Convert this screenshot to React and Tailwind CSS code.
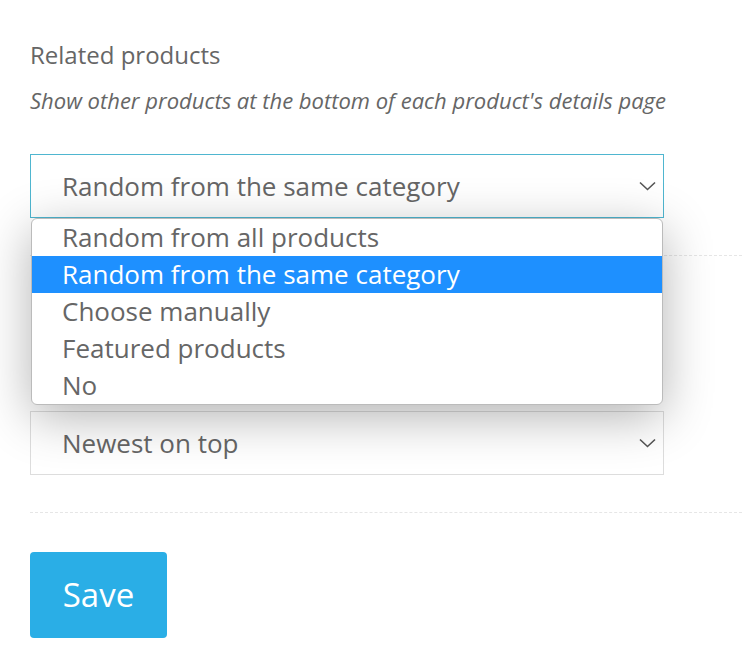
import { useState } from 'react'

const options = [
  'Random from all products',
  'Random from the same category',
  'Choose manually',
  'Featured products',
  'No',
]

const Chevron = () => (
  <svg width="17" height="10" viewBox="0 0 17 10" fill="none" className="shrink-0">
    <path d="M1 1.5l7.5 7 7.5-7" stroke="#555" strokeWidth="1.6" />
  </svg>
)

const App = () => {
  const [selected, setSelected] = useState(1)

  return (
    <div
      className="min-h-screen bg-white pl-[30px] pt-[39px] text-[#666]"
      style={{ fontFamily: '"Open Sans", "Noto Sans", sans-serif' }}
    >
      <div className="text-[24px] leading-[32px]">Related products</div>
      <div className="mt-[14px] text-[22px] leading-[30px] italic">
        Show other products at the bottom of each product's details page
      </div>

      <div className="relative mt-[39px] w-[634px]">
        <div className="flex h-[64px] items-center justify-between border border-[#4fb6d0] bg-white pl-[31px] pr-[7px] text-[26px]">
          <span>{options[selected]}</span>
          <Chevron />
        </div>

        <ul className="absolute top-[64px] left-px right-px z-10 overflow-hidden rounded-[6px] border border-[#bbb] bg-white text-[26px] shadow-[0_12px_50px_rgba(0,0,0,0.3)]">
          {options.map((opt, i) => (
            <li
              key={opt}
              onClick={() => setSelected(i)}
              className={
                i === selected
                  ? 'flex h-[37px] items-center bg-[#1e90ff] pl-[30px] text-white'
                  : 'flex h-[37px] items-center pl-[30px] text-[#666]'
              }
            >
              {opt}
            </li>
          ))}
        </ul>
      </div>

      <div className="mt-[37px] border-t border-dashed border-[#e6e6e6]" />

      <div className="pt-[155px]">
        <div className="flex h-[64px] w-[634px] items-center justify-between border border-[#ddd] bg-white pl-[31px] pr-[7px] text-[26px]">
          <span>Newest on top</span>
          <Chevron />
        </div>
      </div>

      <div className="mt-[37px] border-t border-dashed border-[#e6e6e6]" />

      <button
        type="button"
        className="mt-[39px] h-[86px] w-[137px] rounded-[4px] bg-[#2aaee6] text-[33px] text-white"
      >
        Save
      </button>
    </div>
  )
}

export default App
